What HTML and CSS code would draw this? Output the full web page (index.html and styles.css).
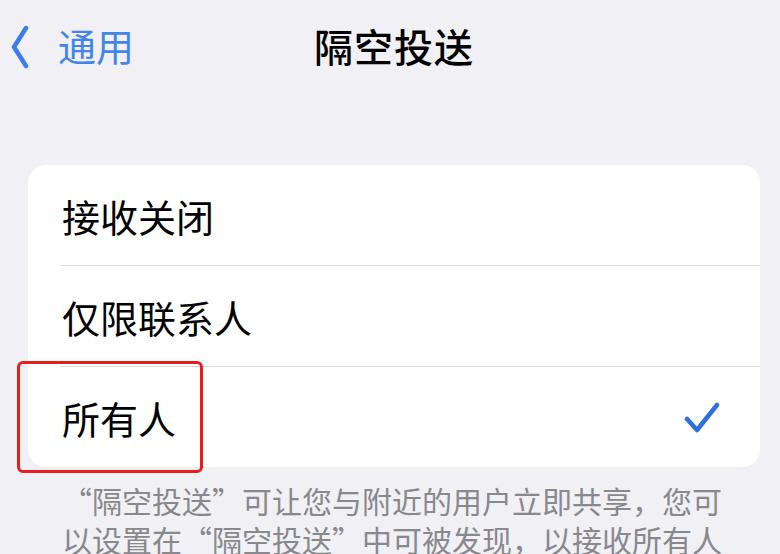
FILE: index.html
```html
<!DOCTYPE html>
<html>
	<head>
		<meta charset="UTF-8">
		<title>隔空投送</title>
		<link rel="stylesheet" href="styles.css">
	</head>
	<body>
		<div class="page">
			<div class="header">
				<a class="back">
					<svg class="chevron" width="20" height="44" viewBox="0 0 20 44">
						<path d="M16 3 L4 22 L16 41" fill="none" stroke="#3b7ee8" stroke-width="4.5" stroke-linecap="round" stroke-linejoin="round"/>
					</svg>
					<span>通用</span>
				</a>
				<div class="title">隔空投送</div>
				<div></div>
			</div>

			<ul class="list">
				<li><span>接收关闭</span></li>
				<li><span>仅限联系人</span></li>
				<li class="selected">
					<span>所有人</span>
					<svg class="check" width="36" height="34" viewBox="0 0 36 34">
						<path d="M3 18 L13 29 L33 4" fill="none" stroke="#2f6fe2" stroke-width="4.5" stroke-linecap="round" stroke-linejoin="round"/>
					</svg>
					<div class="mark"></div>
				</li>
			</ul>

			<p class="note">“隔空投送”可让您与附近的用户立即共享，您可以设置在“隔空投送”中可被发现，以接收所有人</p>
		</div>
	</body>
</html>
```

FILE: styles.css
```css
*{
	padding:0;
	margin:0;
}
ul,li{
	list-style: none;
}
body{
	background: #f0f0f5;
	font-family: "Noto Sans CJK SC", "Noto Sans", sans-serif;
	color: #000;
	overflow: hidden;
}
.page{
	width:780px;
	height:554px;
	overflow: hidden;
}
.header{
	display: grid;
	grid-template-columns: 1fr auto 1fr;
	align-items: center;
	height:90px;
}
.header .back{
	display: flex;
	align-items: center;
	gap:28px;
	padding-left:10px;
	padding-top:4px;
	color: #4285ea;
	font-size:38px;
}
.header .back span{
	margin-top:-6px;
}
.header .chevron{
	display:block;
}
.header .title{
	padding-left:8px;
	font-size:39px;
	font-weight:500;
	letter-spacing:1px;
}
.list{
	margin:75px 20px 0 28px;
	background: #fff;
	border-radius:18px;
}
.list li{
	position: relative;
	height:100px;
	margin-left:32px;
	padding-right:40px;
	display: flex;
	align-items: center;
	justify-content: space-between;
	font-size:38px;
	border-bottom:1px solid #dcdce0;
}
.list li:last-child{
	border-bottom:none;
}
.list li span{
	margin-left:2px;
}
.list .check{
	display:block;
	margin-top:2px;
}
.list .mark{
	position: absolute;
	left:-43px;
	top:-6px;
	width:180px;
	height:106px;
	border:3px solid #e4201f;
	border-radius:6px;
}
.note{
	padding:14px 40px 0 62px;
	font-size:30px;
	line-height:39px;
	color: #88888d;
}
```
